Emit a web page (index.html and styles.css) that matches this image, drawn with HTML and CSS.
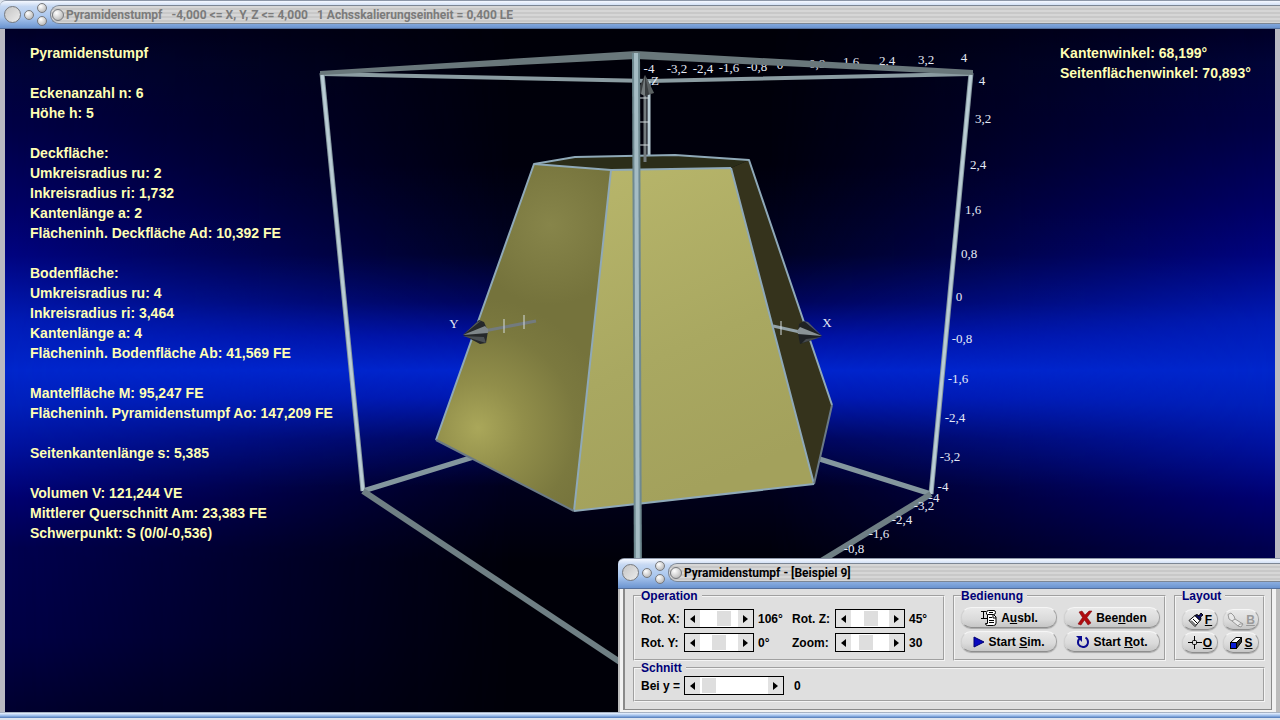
FILE: index.html
```html
<!DOCTYPE html>
<html lang="de">
<head>
<meta charset="UTF-8">
<title>Pyramidenstumpf</title>
<link rel="stylesheet" href="styles.css">
</head>

<body>

<!-- Hauptfenster -->
<div class="window main">
  <div class="title-bar inactive">
    <button class="knob big" aria-label="Schließen"></button>
    <button class="knob" aria-label="Minimieren"></button>
    <span class="knob-pair">
      <button class="knob" aria-label="Maximieren"></button>
      <button class="knob" aria-label="Einrollen"></button>
    </span>
    <div class="caption">
      <span class="knob mid"></span>
      <span>Pyramidenstumpf</span>
      <span>-4,000 &lt;= X, Y, Z &lt;= 4,000</span>
      <span>1 Achsskalierungseinheit = 0,400 LE</span>
    </div>
  </div>

  <div class="view">
    <svg class="scene" viewBox="5 29 1270 683">
      <defs>
        <radialGradient id="left-face" gradientUnits="userSpaceOnUse" cx="478" cy="428" r="130" gradientTransform="rotate(20 478 428)">
          <stop offset="0" stop-color="#aaa75a"/>
          <stop offset="0.35" stop-color="#918e4a"/>
          <stop offset="0.75" stop-color="#7b793f"/>
          <stop offset="1" stop-color="#75733c"/>
        </radialGradient>
        <radialGradient id="left-glow" gradientUnits="userSpaceOnUse" cx="550" cy="225" r="80">
          <stop offset="0" stop-color="#87854a"/>
          <stop offset="1" stop-color="#87854a" stop-opacity="0"/>
        </radialGradient>
        <linearGradient id="front-face" x1="0" y1="0" x2="0.3" y2="1">
          <stop offset="0" stop-color="#b8b66b"/>
          <stop offset="0.6" stop-color="#a9a861"/>
          <stop offset="1" stop-color="#a3a15c"/>
        </linearGradient>
      </defs>

      <!-- hintere Kanten des Würfels -->
      <path class="rod thin" d="M322 74 L649 81 L971 74"/>
      <path class="rod" d="M363 491 L480 455"/>
      <path class="rod" d="M931 494 L810 456"/>
      <path class="rod light" d="M649 81 V157"/>

      <!-- Pyramidenstumpf -->
      <polygon fill="#2b2d19" points="534,164 575,157 675,155 749,160 731,168 611,170"/>
      <polygon fill="url(#left-face)" points="534,164 611,170 574,511 436,440"/>
      <polygon fill="url(#left-glow)" points="534,164 611,170 574,511 436,440"/>
      <polygon fill="url(#front-face)" points="611,170 731,168 814,484 574,511"/>
      <polygon fill="#35331c" points="731,168 749,160 832,405 814,484"/>
      <path class="edge" d="M436 440 L534 164 L575 157 L675 155 L749 160 L832 405"/>
      <path class="edge" d="M534 164 L611 170 L731 168 M611 170 L574 511 M731 168 L814 484"/>
      <path class="edge dark" d="M436 440 L574 511 M814 484 L832 405"/>
      <path class="edge" d="M574 511 L814 484"/>

      <!-- Z-Achse -->
      <path class="axis" d="M645 162 V92"/>
      <path class="tick" d="M640 98 H649 M640 122 H649 M640 145 H649"/>
      <polygon fill="#3a3e40" points="645,75 637,92 645,96 654,93"/>
      <polygon fill="#747b7d" points="645,75 641,94 645,96"/>
      <polygon fill="#5a6062" points="645,75 649,94 654,93"/>

      <!-- Y-Achse -->
      <polygon fill="#25282a" points="463,335 479,320 484,322 488,331 486,343 480,344"/>
      <polygon fill="#555b5e" points="463,335 476,323 482,320"/>
      <path class="axis" d="M484 331 L536 321"/>
      <polygon fill="#7f878a" points="463,335 485,326 488,329 488,333"/>
      <polygon fill="#4b5053" points="463,336 484,337 486,343"/>
      <path class="tick" d="M504 319 V333 M524 315 V329"/>

      <!-- X-Achse -->
      <path class="axis light" d="M773 326 L800 332"/>
      <polygon fill="#1f2224" points="822,336 804,321 799,324 798,333 800,344 806,342"/>
      <polygon fill="#565c5f" points="822,336 808,322 804,321"/>
      <polygon fill="#8a9396" points="822,336 800,327 797,331 798,334"/>
      <polygon fill="#44494c" points="822,337 806,339 802,343"/>
      <path class="tick" d="M781 321 V335"/>

      <!-- Skala oben -->
      <g class="scale">
        <text x="649" y="73">-4</text>
        <text x="677" y="73">-3,2</text>
        <text x="703" y="73">-2,4</text>
        <text x="729" y="72">-1,6</text>
        <text x="757" y="71">-0,8</text>
        <text x="780" y="69">0</text>
        <text x="817" y="68">0,8</text>
        <text x="851" y="66">1,6</text>
        <text x="887" y="65">2,4</text>
        <text x="926" y="64">3,2</text>
        <text x="964" y="62">4</text>
      </g>

      <!-- vordere Kanten des Würfels -->
      <path class="rod" d="M322 73 L363 491"/>
      <path class="rod light" d="M322 73 L363 491"/>
      <path class="rod" d="M971 73 L931 494"/>
      <path class="rod light" d="M971 73 L931 494"/>
      <path class="rod dim" d="M363 491 L650 682"/>
      <path class="rod dim" d="M931 494 L790 580"/>
      <polygon fill="#69777b" points="320,71 636,51 973,70 973,75 636,59 320,75"/>
      <path class="rod front" d="M636 53 L638 600"/>
      <path class="rod front-light" d="M636 53 L638 600"/>

      <!-- Skala rechts und unten -->
      <g class="scale">
        <text x="982" y="85">4</text>
        <text x="983" y="123">3,2</text>
        <text x="978" y="169">2,4</text>
        <text x="973" y="214">1,6</text>
        <text x="969" y="258">0,8</text>
        <text x="959" y="301">0</text>
        <text x="962" y="343">-0,8</text>
        <text x="958" y="383">-1,6</text>
        <text x="955" y="422">-2,4</text>
        <text x="950" y="461">-3,2</text>
        <text x="943" y="491">-4</text>
        <text x="934" y="502">-4</text>
        <text x="924" y="510">-3,2</text>
        <text x="902" y="524">-2,4</text>
        <text x="879" y="538">-1,6</text>
        <text x="854" y="553">-0,8</text>
        <text x="454" y="328">Y</text>
        <text x="827" y="327">X</text>
        <text x="655" y="85">Z</text>
      </g>
    </svg>

    <div class="info">
      <div class="group">
        <p>Pyramidenstumpf</p>
      </div>
      <div class="group">
        <p>Eckenanzahl n: 6</p>
        <p>Höhe h: 5</p>
      </div>
      <div class="group">
        <p>Deckfläche:</p>
        <p>Umkreisradius ru: 2</p>
        <p>Inkreisradius ri: 1,732</p>
        <p>Kantenlänge a: 2</p>
        <p>Flächeninh. Deckfläche Ad: 10,392 FE</p>
      </div>
      <div class="group">
        <p>Bodenfläche:</p>
        <p>Umkreisradius ru: 4</p>
        <p>Inkreisradius ri: 3,464</p>
        <p>Kantenlänge a: 4</p>
        <p>Flächeninh. Bodenfläche Ab: 41,569 FE</p>
      </div>
      <div class="group">
        <p>Mantelfläche M: 95,247 FE</p>
        <p>Flächeninh. Pyramidenstumpf Ao: 147,209 FE</p>
      </div>
      <div class="group">
        <p>Seitenkantenlänge s: 5,385</p>
      </div>
      <div class="group">
        <p>Volumen V: 121,244 VE</p>
        <p>Mittlerer Querschnitt Am: 23,383 FE</p>
        <p>Schwerpunkt: S (0/0/-0,536)</p>
      </div>
    </div>

    <div class="info angles">
      <div class="group">
        <p>Kantenwinkel: 68,199°</p>
        <p>Seitenflächenwinkel: 70,893°</p>
      </div>
    </div>
  </div>

  <div class="bottom-bar"></div>
</div>

<!-- Bedienfenster -->
<div class="window dialog">
  <div class="title-bar">
    <button class="knob big" aria-label="Schließen"></button>
    <button class="knob" aria-label="Minimieren"></button>
    <span class="knob-pair">
      <button class="knob" aria-label="Maximieren"></button>
      <button class="knob" aria-label="Einrollen"></button>
    </span>
    <div class="caption">
      <span class="knob mid"></span>
      <span>Pyramidenstumpf - [Beispiel 9]</span>
    </div>
  </div>

  <div class="dialog-body">
    <form class="panel">
      <fieldset>
        <legend>Operation</legend>
        <div class="operation">
          <label for="rot-x">Rot. X:</label>
          <div class="scroller">
            <button type="button" class="left" aria-label="Weniger"></button>
            <input type="range" id="rot-x" min="0" max="100" value="72">
            <button type="button" class="right" aria-label="Mehr"></button>
          </div>
          <output for="rot-x">106°</output>

          <label for="rot-z">Rot. Z:</label>
          <div class="scroller">
            <button type="button" class="left" aria-label="Weniger"></button>
            <input type="range" id="rot-z" min="0" max="100" value="56">
            <button type="button" class="right" aria-label="Mehr"></button>
          </div>
          <output for="rot-z">45°</output>

          <label for="rot-y">Rot. Y:</label>
          <div class="scroller">
            <button type="button" class="left" aria-label="Weniger"></button>
            <input type="range" id="rot-y" min="0" max="100" value="48">
            <button type="button" class="right" aria-label="Mehr"></button>
          </div>
          <output for="rot-y">0°</output>

          <label for="zoom">Zoom:</label>
          <div class="scroller">
            <button type="button" class="left" aria-label="Weniger"></button>
            <input type="range" id="zoom" min="0" max="100" value="32">
            <button type="button" class="right" aria-label="Mehr"></button>
          </div>
          <output for="zoom">30</output>
        </div>
      </fieldset>

      <fieldset>
        <legend>Bedienung</legend>
        <div class="actions">
          <button type="button" class="btn">
            <svg width="18" height="18" viewBox="0 0 18 18" fill="none" stroke="#000">
              <path fill="#fff" d="M6.500 5.500 V3.500 Q6.500 1.500 8.500 1.500 H14 Q15.500 1.500 15.500 3.500 Q15.500 5.500 13.500 5.500 H8"/>
              <path fill="#fff" d="M7.500 5.500 H13.500 L16 8 V14 Q16 16.500 13.500 16.500 H7.500 Q5.500 16.500 5.500 14.500 H7.500 Z"/>
              <path d="M1 2.500 H6 M3.500 2.500 V9.500 M1 9.500 H7 M9 3.500 H13 M9 8.500 H12 M9 11.500 H14 M9 13.500 H14 M13 6 V9 H16"/>
            </svg>
            <span>A<u>u</u>sbl.</span>
          </button>
          <button type="button" class="btn">
            <svg width="16" height="16" viewBox="0 0 16 16">
              <path fill="#b00c10" stroke="#7a0508" stroke-width="0.500" d="M2 2 L5 1 L8 5 L12 1 L15 1 L10 7.500 L14 13 L11 15 L7.500 10 L4 15 L1 14 L5.500 7.500 Z"/>
            </svg>
            <span>Bee<u>n</u>den</span>
          </button>
          <button type="button" class="btn">
            <svg width="12" height="12" viewBox="0 0 12 12">
              <path fill="#0808c0" stroke="#000070" d="M1 1 L11 6 L1 11 Z"/>
            </svg>
            <span>Start <u>S</u>im.</span>
          </button>
          <button type="button" class="btn">
            <svg width="14" height="14" viewBox="0 0 14 14">
              <path fill="none" stroke="#0a0a90" stroke-width="2" d="M4 3 Q1 6 2.500 9.500 Q4.500 12.500 8 12 Q12 11 12 7 Q12 4 9.500 2.500"/>
              <path fill="#0a0a90" d="M0 1 H6 V7 Z"/>
            </svg>
            <span>Start <u>R</u>ot.</span>
          </button>
        </div>
      </fieldset>

      <fieldset>
        <legend>Layout</legend>
        <div class="layout-buttons">
          <button type="button" class="btn">
            <svg width="16" height="16" viewBox="0 0 16 16" stroke="#000">
              <path fill="#fff" d="M1 8.500 L7 3.500 L12 8.500 L7 14.500 Z"/>
              <path fill="none" d="M3 8.500 L7.500 13 M5 7 L9.500 11.500"/>
              <path fill="#10106a" d="M7 3.500 L9 2.500 L11 4 L13 1 L15 3 L12.500 5 L13 7 L12 8.500 Z"/>
            </svg>
            <u>F</u>
          </button>
          <button type="button" class="btn" disabled>
            <svg width="18" height="16" viewBox="0 0 18 16" stroke="#999" fill="#e8e8e8">
              <path d="M1 2.500 L4 1 L7 4 L8 7 L16 12 L14 15 L11 14 L5 9 L2 7 Z"/>
              <path fill="none" d="M8 7 L5 9 M16 12 Q12 11 11 14"/>
            </svg>
            <u>B</u>
          </button>
          <button type="button" class="btn">
            <svg width="14" height="14" viewBox="0 0 14 14" fill="none" stroke="#000">
              <path d="M6.500 0 V5 M6.500 9 V13 M0 6.500 H4 M9 6.500 H14"/>
              <rect x="4.500" y="4.500" width="4" height="4" rx="1"/>
            </svg>
            <u>O</u>
          </button>
          <button type="button" class="btn">
            <svg width="14" height="14" viewBox="0 0 14 14" stroke="#000">
              <path fill="#fff" d="M1.500 6.500 L7 1.500 H12.500 L7.500 6.500 Z"/>
              <path fill="#333" d="M7.500 6.500 L12.500 1.500 V6 L7.500 12.500 Z"/>
              <rect x="1.500" y="6.500" width="6" height="6" fill="#0a1ed8"/>
            </svg>
            <u>S</u>
          </button>
        </div>
      </fieldset>

      <fieldset class="wide">
        <legend>Schnitt</legend>
        <div class="cut">
          <label for="cut-y">Bei y =</label>
          <div class="scroller">
            <button type="button" class="left" aria-label="Weniger"></button>
            <input type="range" id="cut-y" min="0" max="100" value="4">
            <button type="button" class="right" aria-label="Mehr"></button>
          </div>
          <output for="cut-y">0</output>
        </div>
      </fieldset>
    </form>
  </div>
  <div class="bottom-bar"></div>
</div>

</body>
</html>
```
FILE: styles.css
```css
* { box-sizing: border-box; }

body {
  margin: 0;
  height: 100vh;
  overflow: hidden;
  background: #dde4ee;
  font: bold 12px "Liberation Sans", Arial, sans-serif;
  color: #000;
}

p { margin: 0; }

/* Fenster */
.window {
  display: flex;
  flex-direction: column;
}

.main {
  height: 100vh;
  padding-bottom: 2px;
}

.dialog {
  position: absolute;
  right: 0;
  bottom: 2px;
  width: 662px;
}

.title-bar {
  display: flex;
  align-items: center;
  flex: none;
  gap: 3px;
  height: 29px;
  padding-left: 4px;
  border-top: 1px solid #8d97a8;
  border-bottom: 1px solid #55709c;
  border-radius: 6px 0 0 0;
  background: linear-gradient(#f4f8ff, #c6d8f2 20%, #a9c6ee 60%, #6b94d0);
}

.dialog .title-bar {
  height: 31px;
  padding-bottom: 2px;
}

.knob {
  flex: none;
  width: 10px;
  height: 10px;
  padding: 0;
  border: 1px solid #77797d;
  border-radius: 50%;
  background: radial-gradient(circle at 35% 30%, #fff, #d4d4d4 50%, #a8a8a8);
}
.knob.big {
  width: 17px;
  height: 17px;
  background: linear-gradient(135deg, #c4c4c4, #ececec);
}
.knob.mid { width: 12px; height: 12px; }

.knob-pair {
  display: flex;
  flex-direction: column;
  gap: 3px;
}

.caption {
  display: flex;
  align-items: center;
  flex: 1;
  height: 19px;
  padding-left: 1px;
  border: 1px solid #7c8694;
  border-right: none;
  border-radius: 9px 0 0 9px;
  background: repeating-linear-gradient(#d6d6d6 0 2px, #c8c8c8 2px 4px);
  font-family: Roboto, "Liberation Sans", sans-serif;
  white-space: nowrap;
}
.caption .knob { margin-right: 2px; }
.caption span + span + span { margin-left: 9px; }

.inactive .caption { color: #7b7b7b; }

.bottom-bar {
  flex: none;
  height: 6px;
  background: linear-gradient(#8c96a6, #dbe8fb 25%, #9dbdea 60%, #4f78b8);
}

/* 3D-Ansicht */
.view {
  position: relative;
  display: flex;
  justify-content: space-between;
  flex: 1;
  min-height: 0;
  padding: 14px 0 0 25px;
  border: solid #b9b9c2;
  border-width: 0 5px;
  background: linear-gradient(#000028, #000438 5%, #000048 15%, #000064 25%, #000480 33%, #001cb8 43%, #0026cc 50%, #0020bc 55%, #0012a0 61%, #000070 69%, #000050 76%, #000046 89%, #000030);
}

/* dunkle Mitte */
.view::before {
  content: "";
  position: absolute;
  inset: 0;
  background: linear-gradient(#000008, #00000c 20%, #000222 33%, #000458 40%, #0010a0 45%, #0024cc 50%, #0018b0 54%, #000658 60%, #00001c 67%, #000008 78%);
  -webkit-mask-image: linear-gradient(90deg, transparent, #000 40%, #000 60%, transparent);
  mask-image: linear-gradient(90deg, transparent, #000 40%, #000 60%, transparent);
}

.scene {
  position: absolute;
  inset: 0;
  width: 100%;
  height: 100%;
}

.rod { fill: none; stroke: #84979e; stroke-width: 5; }
.rod.thin { stroke: #8b9ca2; stroke-width: 4; }
.rod.light { stroke: #b9ccd4; stroke-width: 3; }
.rod.dim { stroke: #6f7f84; stroke-width: 6; }
.rod.front { stroke: #6f8990; stroke-width: 8; }
.rod.front-light { stroke: #a5bcc4; stroke-width: 4; }

.edge { fill: none; stroke: #8fa9b8; stroke-width: 2; stroke-linejoin: round; }
.edge.dark { stroke: #6b7a86; }

.axis { fill: none; stroke: #737b7e; stroke-width: 3; }
.axis.light { stroke: #93a2a8; }
.tick { fill: none; stroke: #d4dcde; stroke-width: 1; }

.scale text {
  font: 13px "Liberation Serif", "Times New Roman", serif;
  fill: #e6eaf6;
  text-anchor: middle;
}

/* Messwerte */
.info {
  position: relative;
  display: flex;
  flex-direction: column;
  gap: 20px;
  font-size: 14px;
  line-height: 20px;
  color: #ffffb4;
}
.angles { width: 215px; }

/* Bedienfeld */
.dialog-body {
  padding: 0 4px 2px 3px;
  border: solid #bcbcbc;
  border-width: 0 4px 0 2px;
  background: #f2f2f2;
}

.panel {
  display: grid;
  grid-template-columns: 312px 213px 91px;
  justify-content: space-between;
  padding: 0 6px 7px 8px;
  border: solid #8a8a8a;
  border-width: 0 1px 1px 2px;
  background: #dfdfdf;
}

fieldset {
  min-width: 0;
  margin: 0;
  padding: 6px 4px 6px 6px;
  border: 2px groove #f4f4f4;
}
.wide {
  grid-column: 1 / -1;
  padding: 1px 6px 5px;
}

legend {
  padding: 0 4px 0 0;
  line-height: 14px;
  color: #000078;
}

.operation {
  display: grid;
  grid-template-columns: 43px 70px 38px 43px 70px auto;
  row-gap: 5px;
  align-items: center;
}

.cut {
  display: grid;
  grid-template-columns: 43px 100px auto;
  align-items: center;
}

output { padding-left: 4px; }
.cut output { padding-left: 10px; }

.scroller {
  display: flex;
  height: 19px;
  border: 1px solid #000;
  background: #fff;
}

.scroller button {
  display: flex;
  align-items: center;
  justify-content: center;
  width: 15px;
  padding: 0;
  border: none;
  background: #e2e2e2;
}
.scroller button::before {
  content: "";
  border: 4px solid transparent;
}
.scroller .left::before { border-right: 5px solid #000; border-left: none; }
.scroller .right::before { border-left: 5px solid #000; border-right: none; }

.scroller input {
  -webkit-appearance: none;
  appearance: none;
  flex: 1;
  min-width: 0;
  height: 17px;
  margin: 0;
  background: #fff;
}
.scroller input::-webkit-slider-thumb {
  -webkit-appearance: none;
  width: 14px;
  height: 15px;
  background: #dedede;
}

.actions {
  display: grid;
  grid-template-columns: 96px 96px;
  justify-content: space-between;
  row-gap: 3px;
  margin-top: -2px;
}

.layout-buttons {
  display: grid;
  grid-template-columns: 36px 36px;
  justify-content: space-between;
  row-gap: 2px;
}

.btn {
  display: flex;
  align-items: center;
  justify-content: center;
  gap: 3px;
  height: 21px;
  padding: 0;
  border: 1px solid #b4b4b4;
  border-color: #f6f6f6 #a2a2a2 #8e8e8e #d0d0d0;
  border-radius: 10px;
  background: linear-gradient(#e9e9e9, #dadada 60%, #c6c6c6);
  box-shadow: 0 1px 1px #a8a8a8;
  font: inherit;
  color: #000;
}
.btn:disabled { color: #999; }
.layout-buttons .btn { gap: 1px; }
```
